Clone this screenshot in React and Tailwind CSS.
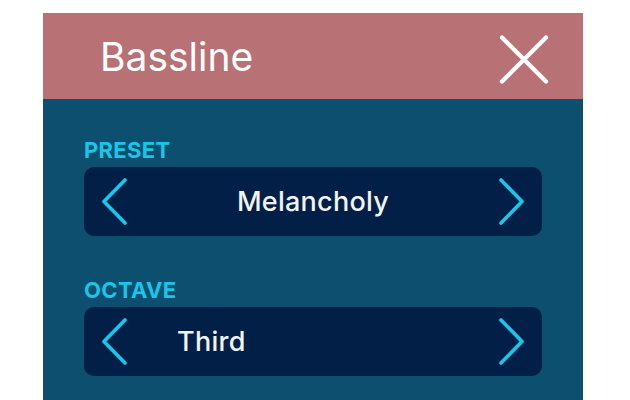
import React from "react";

function Chevron({ dir }) {
  return (
    <svg width="28" height="47" viewBox="0 0 28 47" fill="none">
      {dir === "left" ? (
        <polyline points="24,2 3,23.5 24,45" stroke="#17c8ec" strokeWidth="3.6" strokeLinecap="round" strokeLinejoin="round" />
      ) : (
        <polyline points="4,2 25,23.5 4,45" stroke="#17c8ec" strokeWidth="3.6" strokeLinecap="round" strokeLinejoin="round" />
      )}
    </svg>
  );
}

function Selector({ label, value, centered, first }) {
  return (
    <div className={first ? "pt-[40px]" : "pt-[43px]"}>
      <div className="text-[22px] font-bold leading-none text-[#19c6ea] tracking-[0.015em]">{label}</div>
      <div className="relative mt-[6px] flex h-[69px] items-center justify-between rounded-[10px] bg-[#021f47] px-[17px]">
        <Chevron dir="left" />
        {centered ? (
          <span className="absolute inset-x-0 text-center text-[27px] font-medium leading-none text-[#f1f3f6] tracking-[0.01em]">{value}</span>
        ) : (
          <span className="absolute left-[93px] text-[27px] font-medium leading-none text-[#f1f3f6] tracking-[0.01em]">{value}</span>
        )}
        <Chevron dir="right" />
      </div>
    </div>
  );
}

export default function App() {
  return (
    <div className="h-[400px] w-[630px] overflow-hidden bg-white pt-[13px]" style={{ fontFamily: "Inter, 'Noto Sans', sans-serif" }}>
      <div className="ml-[43px] h-[387px] w-[540px] bg-[#0c4f6e]">
        <div className="flex h-[86px] items-center justify-between bg-[#b87174] pl-[57px] pr-[34px]">
          <span className="mt-[1px] text-[39px] leading-none text-white">Bassline</span>
          <svg width="50" height="49" viewBox="0 0 50 49" className="mt-[7px]" fill="none">
            <line x1="3" y1="2.5" x2="47" y2="46.5" stroke="white" strokeWidth="4.2" strokeLinecap="round" />
            <line x1="47" y1="2.5" x2="3" y2="46.5" stroke="white" strokeWidth="4.2" strokeLinecap="round" />
          </svg>
        </div>
        <div className="px-[41px]">
          <Selector label="PRESET" value="Melancholy" centered first />
          <Selector label="OCTAVE" value="Third" />
        </div>
      </div>
    </div>
  );
}
